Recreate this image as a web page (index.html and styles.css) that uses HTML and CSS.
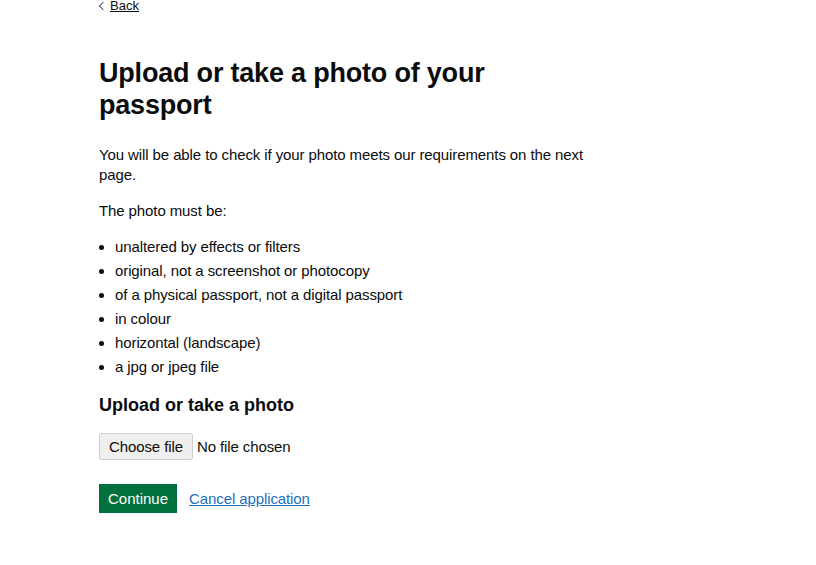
FILE: index.html
```html
<!DOCTYPE html>
<html lang="en">
<head>
    <meta charset="UTF-8">
    <meta name="viewport" content="width=device-width, initial-scale=1.0">
    <title>Upload or take a photo of your passport</title>
    <link rel="stylesheet" href="styles.css">
</head>
<body>

<div class="page">
    <a href="#" class="back-link">Back</a>

    <main class="main">
        <h1 class="heading-l">Upload or take a photo of your passport</h1>

        <p class="body">You will be able to check if your photo meets our requirements on the next page.</p>
        <p class="body">The photo must be:</p>

        <ul class="list">
            <li>unaltered by effects or filters</li>
            <li>original, not a screenshot or photocopy</li>
            <li>of a physical passport, not a digital passport</li>
            <li>in colour</li>
            <li>horizontal (landscape)</li>
            <li>a jpg or jpeg file</li>
        </ul>

        <form class="upload-form">
            <h2 class="heading-m"><label for="photo">Upload or take a photo</label></h2>
            <div class="file-upload">
                <span class="file-button">Choose file</span>
                <span class="file-status">No file chosen</span>
                <input type="file" id="photo" class="file-input" accept=".jpg,.jpeg">
            </div>

            <div class="button-group">
                <button type="submit" class="button">Continue</button>
                <a href="#" class="link">Cancel application</a>
            </div>
        </form>
    </main>
</div>

</body>
</html>
```

FILE: styles.css
```css
* {
    box-sizing: border-box;
    margin: 0;
    padding: 0;
}
body {
    font-family: "Liberation Sans", Arial, sans-serif;
    color: #0b0c0c;
    background: #ffffff;
}
.page {
    padding: 0 0 0 99px;
}
.back-link {
    display: block;
    width: fit-content;
    position: relative;
    margin-top: -2px;
    padding-left: 11px;
    font-size: 13px;
    line-height: 16px;
    color: #0b0c0c;
    text-decoration: underline;
}
.back-link::before {
    content: "";
    position: absolute;
    left: 1px;
    top: 5px;
    width: 5px;
    height: 5px;
    border-left: 1px solid #505a5f;
    border-bottom: 1px solid #505a5f;
    transform: rotate(45deg);
}
.main {
    width: 500px;
    padding-top: 43px;
}
.heading-l {
    font-size: 27px;
    line-height: 32px;
    font-weight: 700;
    letter-spacing: -0.2px;
    margin-bottom: 24px;
}
.body {
    font-size: 15px;
    line-height: 20px;
    letter-spacing: -0.1px;
    margin-bottom: 16px;
}
.list {
    list-style: disc;
    padding-left: 16px;
    font-size: 15px;
    line-height: 20px;
    letter-spacing: -0.1px;
    margin-bottom: 16px;
}
.list li {
    margin-bottom: 4px;
}
.heading-m {
    font-size: 18px;
    line-height: 24px;
    font-weight: 700;
    margin-bottom: 16px;
}
.file-upload {
    position: relative;
    display: flex;
    align-items: center;
    gap: 4px;
    font-size: 15px;
    letter-spacing: -0.1px;
}
.file-button {
    padding: 5px 9px;
    background: #efefef;
    border: 1px solid #cfcfcf;
    border-radius: 2px;
    line-height: 15px;
}
.file-input {
    position: absolute;
    inset: 0;
    opacity: 0;
}
.button-group {
    display: flex;
    align-items: center;
    gap: 12px;
    margin-top: 24px;
}
.button {
    padding: 6px 9px 5px;
    font-family: inherit;
    font-size: 15px;
    line-height: 18px;
    color: #ffffff;
    background: #00703c;
    border: none;
    border-radius: 0;
    box-shadow: 0 2px 0 #002d18;
    cursor: pointer;
}
.link {
    font-size: 15px;
    letter-spacing: -0.1px;
    color: #1d70b8;
    text-decoration: underline;
}
```
